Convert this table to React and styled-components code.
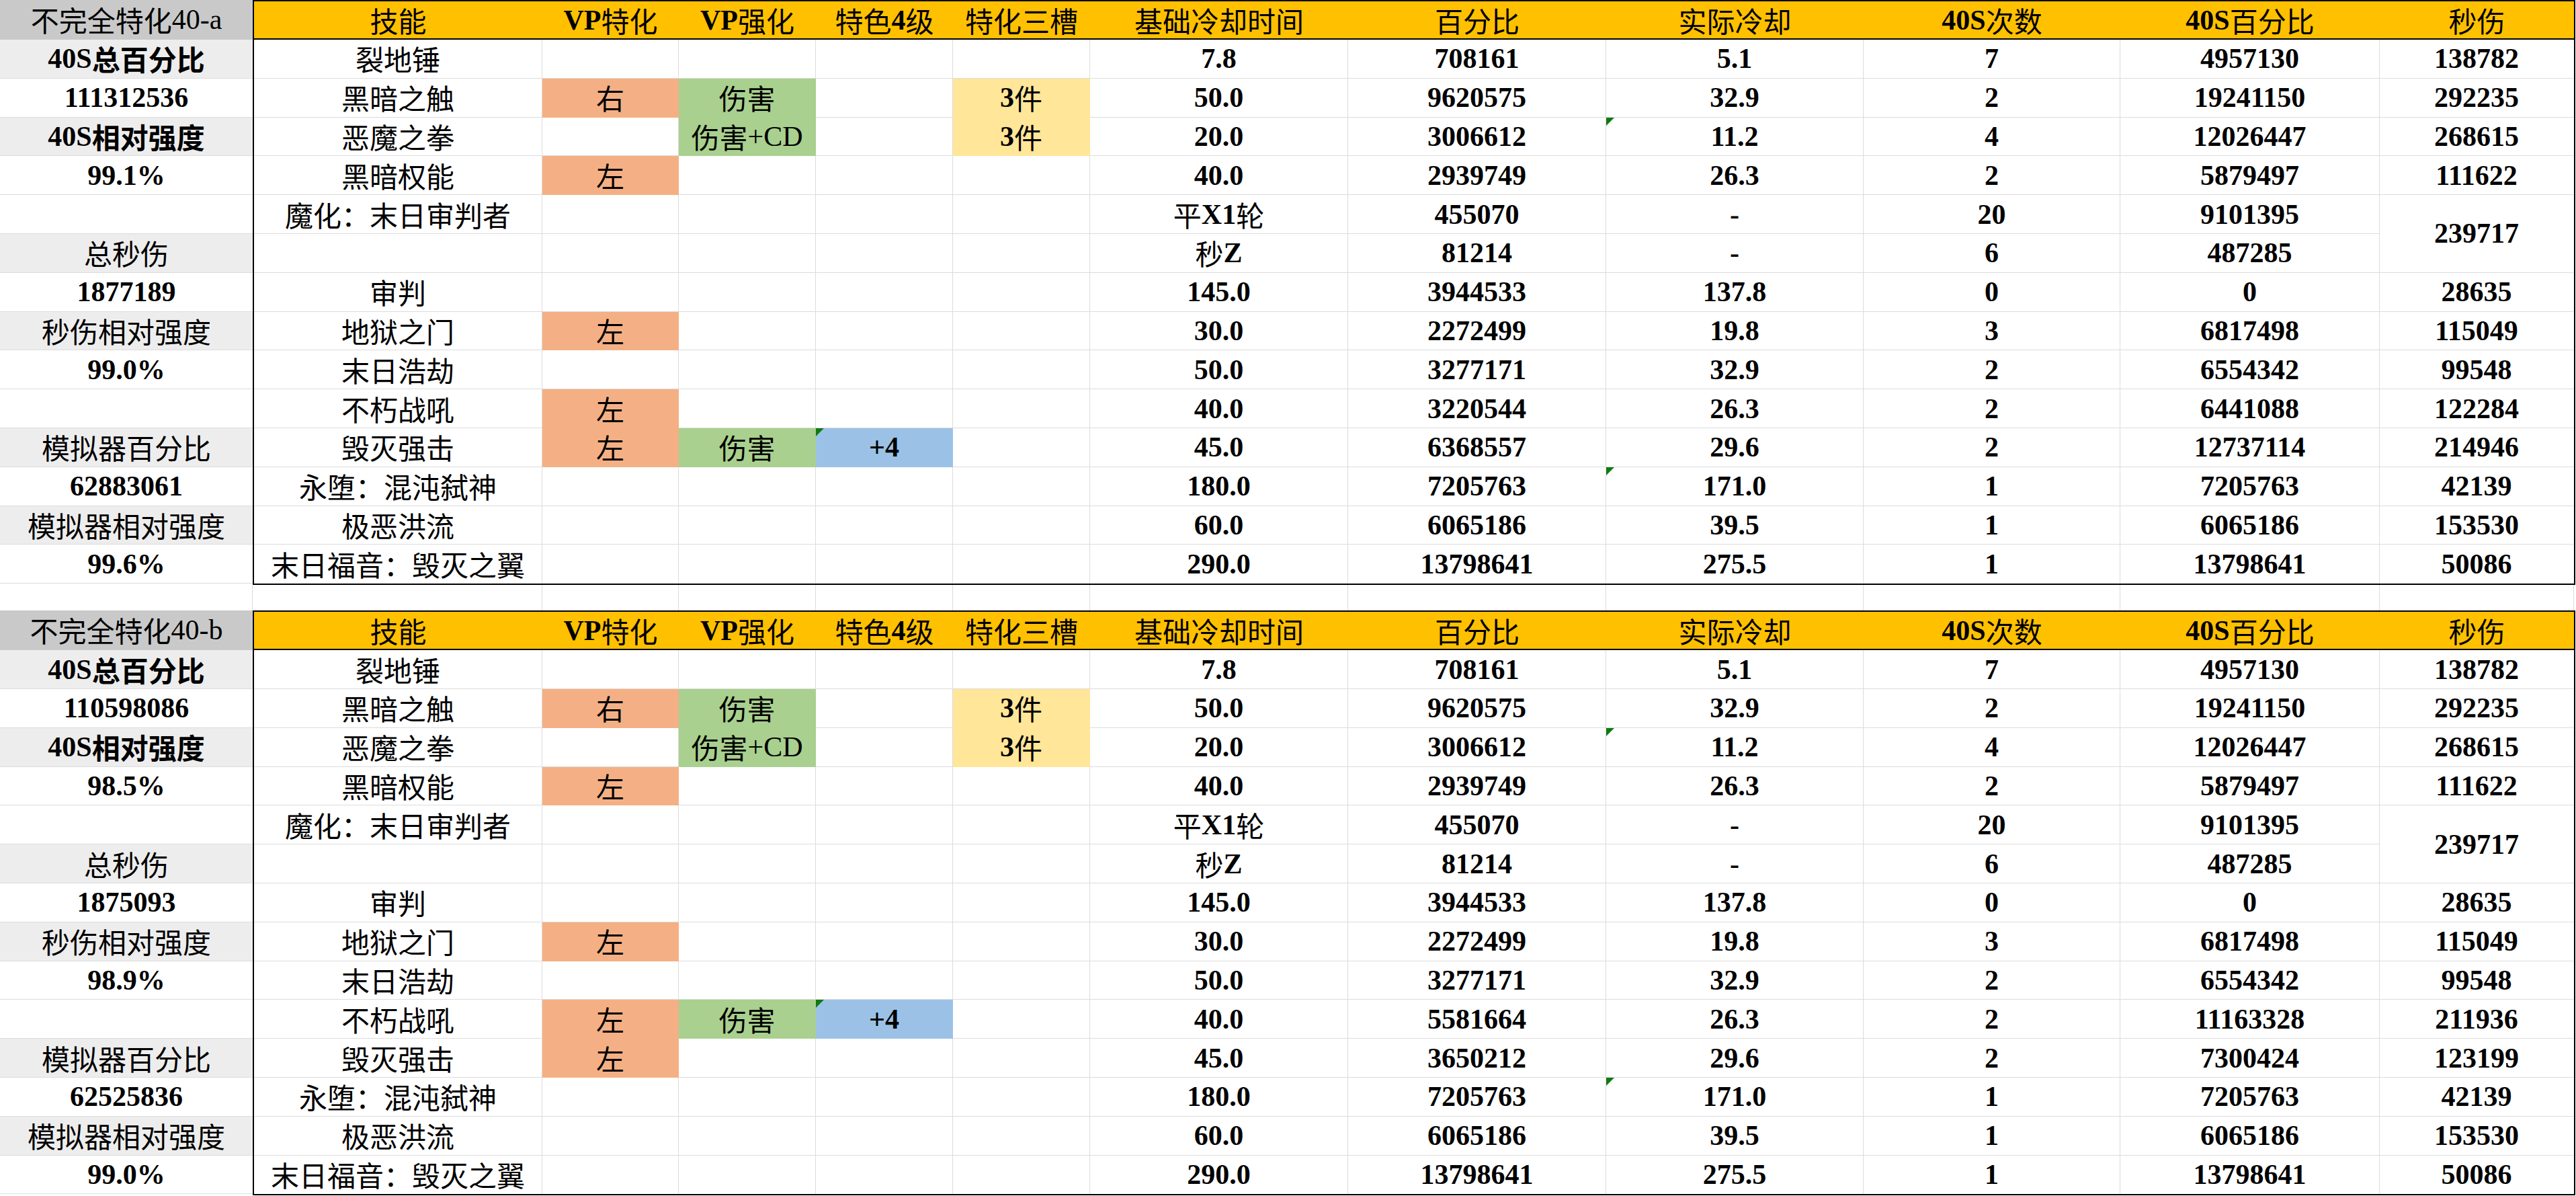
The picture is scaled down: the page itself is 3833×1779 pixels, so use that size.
import React from "react";
import styled, { createGlobalStyle } from "styled-components";

const GlobalStyle = createGlobalStyle`
  * { box-sizing: border-box; }
  body {
    margin: 0;
    background: #fff;
    color: #000;
    font-family: "Liberation Serif", "Noto Sans CJK SC", serif;
  }
`;

const GRID = "#DCDCDC";
const FILLS = {
  orange: "#F4B084",
  green: "#A9D08E",
  yellow: "#FFE699",
  blue: "#9BC2E6",
};
const COLS = [429, 203, 204, 204, 204, 384, 384, 383, 382, 386, 289];
const colTemplate = COLS.map((w) => `${w}px`).join(" ");
const SPACER_COLS = [376, 431, 203, 204, 204, 204, 384, 384, 383, 382, 386, 289];
const HEADS = [
  "技能",
  "VP特化",
  "VP强化",
  "特色4级",
  "特化三槽",
  "基础冷却时间",
  "百分比",
  "实际冷却",
  "40S次数",
  "40S百分比",
  "秒伤",
];

const Page = styled.main`
  width: 3832px;
  display: flex;
  flex-direction: column;
`;

const Sheet = styled.section`
  display: flex;
  align-items: stretch;
`;

const Side = styled.div`
  width: 376px;
  display: grid;
  grid-template-rows: 59px repeat(14, 57.8px);
  align-content: start;
`;

const SideCell = styled.div`
  display: flex;
  align-items: center;
  justify-content: center;
  font-size: 42px;
  line-height: 1;
  background: ${(p) =>
    p.$tone === "title" ? "#C9C9C9" : p.$tone === "label" ? "#EDEDED" : "#fff"};
  border-bottom: 1px solid ${(p) => (p.$tone === "title" ? "#C9C9C9" : GRID)};
`;

const Table = styled.div`
  width: 3456px;
  border: 2px solid #000;
`;

const Head = styled.div`
  display: grid;
  grid-template-columns: ${colTemplate};
  height: 57px;
  background: #ffc000;
  border-bottom: 2px solid #000;
`;

const HeadCell = styled.div`
  display: flex;
  align-items: center;
  justify-content: center;
  font-size: 42px;
  line-height: 1;
`;

const Body = styled.div`
  display: grid;
  grid-template-columns: ${colTemplate};
  grid-auto-rows: 57.8px;
`;

const Cell = styled.div`
  position: relative;
  display: flex;
  align-items: center;
  justify-content: center;
  font-size: 42px;
  line-height: 1;
  background: ${(p) => (p.$fill ? FILLS[p.$fill] : "#fff")};
  border-right: 1px solid ${(p) => (p.$last ? "transparent" : p.$fill ? FILLS[p.$fill] : GRID)};
  border-bottom: 1px solid ${(p) => (p.$end ? "transparent" : p.$fill ? FILLS[p.$fill] : GRID)};
  grid-row: ${(p) => (p.$span ? `span ${p.$span}` : "auto")};

  &::before {
    content: "";
    display: ${(p) => (p.$flag ? "block" : "none")};
    position: absolute;
    left: 0;
    top: 0;
    border-top: 12px solid #0f7a0f;
    border-right: 12px solid transparent;
  }
`;

const Spacer = styled.div`
  display: grid;
  grid-template-columns: ${SPACER_COLS.map((w) => `${w}px`).join(" ")};
  height: 38px;
`;

const SpacerCell = styled.div`
  border-right: 1px solid ${GRID};
`;

const Lat = styled.span`
  font-family: "Liberation Serif", serif;
  font-weight: ${(p) => (p.$light ? 400 : 700)};
`;

const Han = styled.span`
  font-family: "Noto Sans CJK SC", sans-serif;
  font-weight: ${(p) => (p.$bold ? 700 : 400)};
`;

function Txt({ text, light, boldCjk }) {
  const parts = String(text).split(/([\x21-\x7e]+)/).filter(Boolean);
  return parts.map((p, i) =>
    /^[\x21-\x7e]+$/.test(p) ? (
      <Lat key={i} $light={light}>
        {p}
      </Lat>
    ) : (
      <Han key={i} $bold={boldCjk}>
        {p}
      </Han>
    )
  );
}

const O = (t) => ({ t, fill: "orange" });
const G = (t) => ({ t, fill: "green", light: true });
const Y = (t) => ({ t, fill: "yellow" });
const Bl = (t) => ({ t, fill: "blue", flag: true });
const F = (t) => ({ t, flag: true });

function skillRows(row10, row11) {
  return [
    ["裂地锤", "", "", "", "", "7.8", "708161", "5.1", "7", "4957130", "138782"],
    ["黑暗之触", O("右"), G("伤害"), "", Y("3件"), "50.0", "9620575", "32.9", "2", "19241150", "292235"],
    ["恶魔之拳", "", G("伤害+CD"), "", Y("3件"), "20.0", "3006612", F("11.2"), "4", "12026447", "268615"],
    ["黑暗权能", O("左"), "", "", "", "40.0", "2939749", "26.3", "2", "5879497", "111622"],
    ["魔化：末日审判者", "", "", "", "", "平X1轮", "455070", "-", "20", "9101395", { t: "239717", span: 2 }],
    ["", "", "", "", "", "秒Z", "81214", "-", "6", "487285"],
    ["审判", "", "", "", "", "145.0", "3944533", "137.8", "0", "0", "28635"],
    ["地狱之门", O("左"), "", "", "", "30.0", "2272499", "19.8", "3", "6817498", "115049"],
    ["末日浩劫", "", "", "", "", "50.0", "3277171", "32.9", "2", "6554342", "99548"],
    row10,
    row11,
    ["永堕：混沌弑神", "", "", "", "", "180.0", "7205763", F("171.0"), "1", "7205763", "42139"],
    ["极恶洪流", "", "", "", "", "60.0", "6065186", "39.5", "1", "6065186", "153530"],
    ["末日福音：毁灭之翼", "", "", "", "", "290.0", "13798641", "275.5", "1", "13798641", "50086"],
  ];
}

const SHEETS = [
  {
    title: "不完全特化40-a",
    side: ["111312536", "99.1%", "1877189", "99.0%", "62883061", "99.6%"],
    rows: skillRows(
      ["不朽战吼", O("左"), "", "", "", "40.0", "3220544", "26.3", "2", "6441088", "122284"],
      ["毁灭强击", O("左"), G("伤害"), Bl("+4"), "", "45.0", "6368557", "29.6", "2", "12737114", "214946"]
    ),
  },
  {
    title: "不完全特化40-b",
    side: ["110598086", "98.5%", "1875093", "98.9%", "62525836", "99.0%"],
    rows: skillRows(
      ["不朽战吼", O("左"), G("伤害"), Bl("+4"), "", "40.0", "5581664", "26.3", "2", "11163328", "211936"],
      ["毁灭强击", O("左"), "", "", "", "45.0", "3650212", "29.6", "2", "7300424", "123199"]
    ),
  },
];

function sideCells(v) {
  return [
    { t: "40S总百分比", tone: "label", bold: true },
    { t: v[0] },
    { t: "40S相对强度", tone: "label", bold: true },
    { t: v[1] },
    { t: "" },
    { t: "总秒伤", tone: "label" },
    { t: v[2] },
    { t: "秒伤相对强度", tone: "label" },
    { t: v[3] },
    { t: "" },
    { t: "模拟器百分比", tone: "label" },
    { t: v[4] },
    { t: "模拟器相对强度", tone: "label" },
    { t: v[5] },
  ];
}

function DataSheet({ sheet }) {
  const last = sheet.rows.length - 1;
  return (
    <Sheet>
      <Side>
        <SideCell $tone="title">
          <Txt text={sheet.title} light />
        </SideCell>
        {sideCells(sheet.side).map((c, i) => (
          <SideCell key={i} $tone={c.tone}>
            <Txt text={c.t} boldCjk={c.bold} />
          </SideCell>
        ))}
      </Side>
      <Table>
        <Head>
          {HEADS.map((h) => (
            <HeadCell key={h}>
              <Txt text={h} />
            </HeadCell>
          ))}
        </Head>
        <Body>
          {sheet.rows.map((row, r) =>
            row.map((raw, c) => {
              const cell = typeof raw === "string" ? { t: raw } : raw;
              const span = cell.span || 1;
              return (
                <Cell
                  key={`${r}-${c}`}
                  $fill={cell.fill}
                  $flag={cell.flag}
                  $span={cell.span}
                  $last={c === COLS.length - 1}
                  $end={r + span - 1 === last}
                >
                  <Txt text={cell.t} light={cell.light} />
                </Cell>
              );
            })
          )}
        </Body>
      </Table>
    </Sheet>
  );
}

export default function App() {
  return (
    <>
      <GlobalStyle />
      <Page>
        <DataSheet sheet={SHEETS[0]} />
        <Spacer>
          {SPACER_COLS.map((w, i) => (
            <SpacerCell key={i} />
          ))}
        </Spacer>
        <DataSheet sheet={SHEETS[1]} />
      </Page>
    </>
  );
}
